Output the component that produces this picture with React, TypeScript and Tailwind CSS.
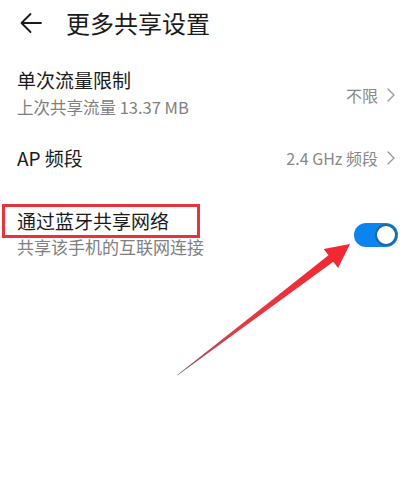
import React from "react";

function Chevron() {
  return (
    <svg width="10" height="16" viewBox="0 0 10 16" className="ml-[8px]">
      <path d="M2 2 L8 8 L2 14" fill="none" stroke="#9a9a9a" strokeWidth="1.4" strokeLinecap="round" strokeLinejoin="round" />
    </svg>
  );
}

function Toggle() {
  return (
    <div className="w-[44px] h-[24px] rounded-full bg-[#0b84f0] relative">
      <div className="absolute right-[1px] top-[1px] w-[22px] h-[22px] rounded-full bg-white border-[2px] border-[#1d6a9a]" />
    </div>
  );
}

export default function App() {
  return (
    <div
      className="relative w-[416px] h-[495px] bg-white overflow-hidden"
      style={{ fontFamily: '"Noto Sans CJK SC", "Noto Sans", sans-serif' }}
    >
      {/* header */}
      <div className="h-[46px] flex items-center pl-[19px]">
        <svg width="24" height="22" viewBox="0 0 24 22">
          <path d="M22 11 H2.5 M11.5 2 L2.5 11 L11.5 20" fill="none" stroke="#1a1a1a" strokeWidth="1.8" strokeLinecap="round" strokeLinejoin="round" />
        </svg>
        <div className="ml-[23px] text-[24px] leading-[30px] text-[#1a1a1a]">更多共享设置</div>
      </div>

      {/* row 1 */}
      <div className="flex items-center pl-[17px] pr-[20px] pt-[21px] pb-[12px]">
        <div className="flex-1">
          <div className="text-[19px] leading-[26px] text-[#1a1a1a]">单次流量限制</div>
          <div className="mt-[3px] text-[16.5px] leading-[22px] text-[#808080]">上次共享流量 13.37 MB</div>
        </div>
        <div className="flex items-center text-[16px] text-[#888888] mt-[5px]">
          不限
          <Chevron />
        </div>
      </div>

      {/* row 2 */}
      <div className="flex items-center pl-[17px] pr-[20px] pt-[15px] pb-[15px]">
        <div className="flex-1 text-[19px] leading-[26px] text-[#1a1a1a]">AP 频段</div>
        <div className="flex items-center text-[16px] text-[#888888]">
          2.4 GHz 频段
          <Chevron />
        </div>
      </div>

      {/* row 3 */}
      <div className="relative flex items-center pl-[17px] pr-[18px] pt-[22px]">
        <div className="flex-1">
          <div className="text-[19px] leading-[26px] text-[#1a1a1a]">通过蓝牙共享网络</div>
          <div className="mt-[2px] text-[17px] leading-[22px] text-[#808080]">共享该手机的互联网连接</div>
        </div>
        <div className="mt-[4px]">
          <Toggle />
        </div>
        <div className="absolute left-[2px] top-[18px] w-[198px] h-[34px] border-[3px] border-[#e8323c]" />
      </div>

      {/* annotation arrow */}
      <svg className="absolute left-0 top-0" width="416" height="495" viewBox="0 0 416 495">
        <defs>
          <linearGradient id="ag" x1="177" y1="375" x2="350" y2="244" gradientUnits="userSpaceOnUse">
            <stop offset="0" stopColor="#7a5562" />
            <stop offset="0.35" stopColor="#e23a48" />
            <stop offset="1" stopColor="#f5252f" />
          </linearGradient>
        </defs>
        <polygon
          points="177,375.8 177.8,374.6 328.5,255.3 323.7,248.9 350,244 338.1,268.1 333.3,261.7"
          fill="url(#ag)"
        />
      </svg>
    </div>
  );
}
